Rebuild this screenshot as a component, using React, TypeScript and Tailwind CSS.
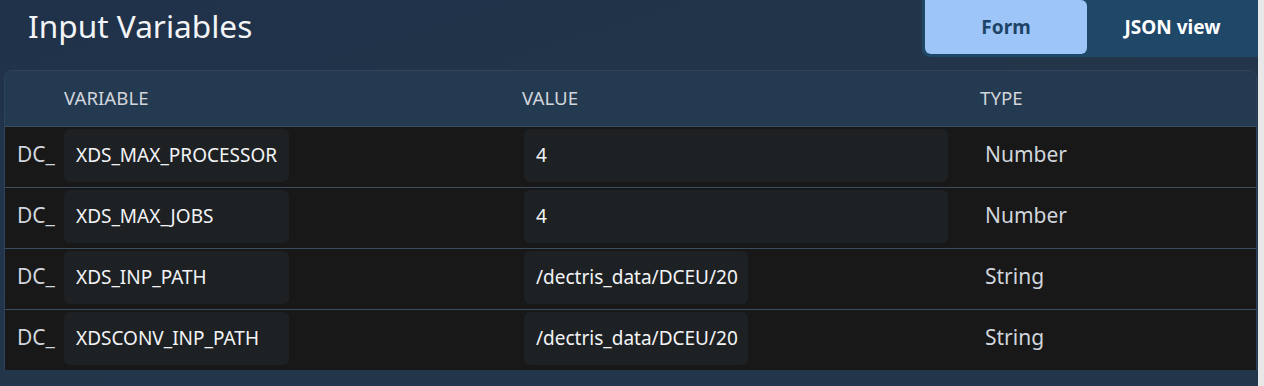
const rows = [
  { name: 'XDS_MAX_PROCESSOR', value: '4', type: 'Number' },
  { name: 'XDS_MAX_JOBS', value: '4', type: 'Number' },
  { name: 'XDS_INP_PATH', value: '/dectris_data/DCEU/20', type: 'String' },
  { name: 'XDSCONV_INP_PATH', value: '/dectris_data/DCEU/20', type: 'String' },
]

export default function App() {
  return (
    <div
      className="flex h-[386px] w-[1264px] overflow-hidden bg-[#213248]"
      style={{ fontFamily: '"Noto Sans", "Open Sans", sans-serif' }}
    >
      <div className="flex w-[1258px] flex-col bg-gradient-to-br from-[#20324a] via-[#233549] to-[#22354b]">
        <div className="flex h-[70px] items-start justify-between">
          <h1 className="mt-[6px] pl-[28px] text-[31.6px] leading-[40px] text-gray-100">Input Variables</h1>
          <div className="flex h-[57px] w-[336px] items-start rounded-bl-lg bg-[#1f4768] pl-[3px]">
            <button className="h-[54px] w-[162px] rounded-b-md rounded-tr-md bg-[#9ec5f7] text-[19px] font-bold text-[#1d4466]">
              Form
            </button>
            <button className="h-[54px] flex-1 text-[19px] font-bold text-white">JSON view</button>
          </div>
        </div>

        <div className="ml-[4px] w-[1253px] overflow-hidden rounded-t-lg border border-b-0 border-[#2e435a]">
          <div className="grid h-[55px] grid-cols-[59px_458px_458px_1fr] items-center bg-[#243a51] text-[18.7px] text-gray-300">
            <div />
            <div>VARIABLE</div>
            <div>VALUE</div>
            <div>TYPE</div>
          </div>
          {rows.map((r) => (
            <div
              key={r.name}
              className="grid h-[61px] grid-cols-[59px_458px_458px_1fr] items-center border-t border-[#3b4d60] bg-[#181818] pb-[4px] text-[21px]"
            >
              <div className="pl-[12px] text-gray-300">DC_</div>
              <div>
                <div className="flex h-[53px] w-[225px] items-center rounded-md bg-[#1e2124] pl-[12px] text-[19px] text-gray-100">
                  {r.name}
                </div>
              </div>
              <div className="pl-[2px]">
                <div
                  className={
                    'flex h-[53px] items-center rounded-md bg-[#1e2124] pl-[12px] text-[19px] text-gray-100 ' +
                    (r.type === 'Number' ? 'w-[424px]' : 'w-[224px]')
                  }
                >
                  {r.value}
                </div>
              </div>
              <div className="pl-[5px] text-gray-300">{r.type}</div>
            </div>
          ))}
        </div>
      </div>
      <div className="flex-1 bg-[#e8e8e8]" />
    </div>
  )
}
